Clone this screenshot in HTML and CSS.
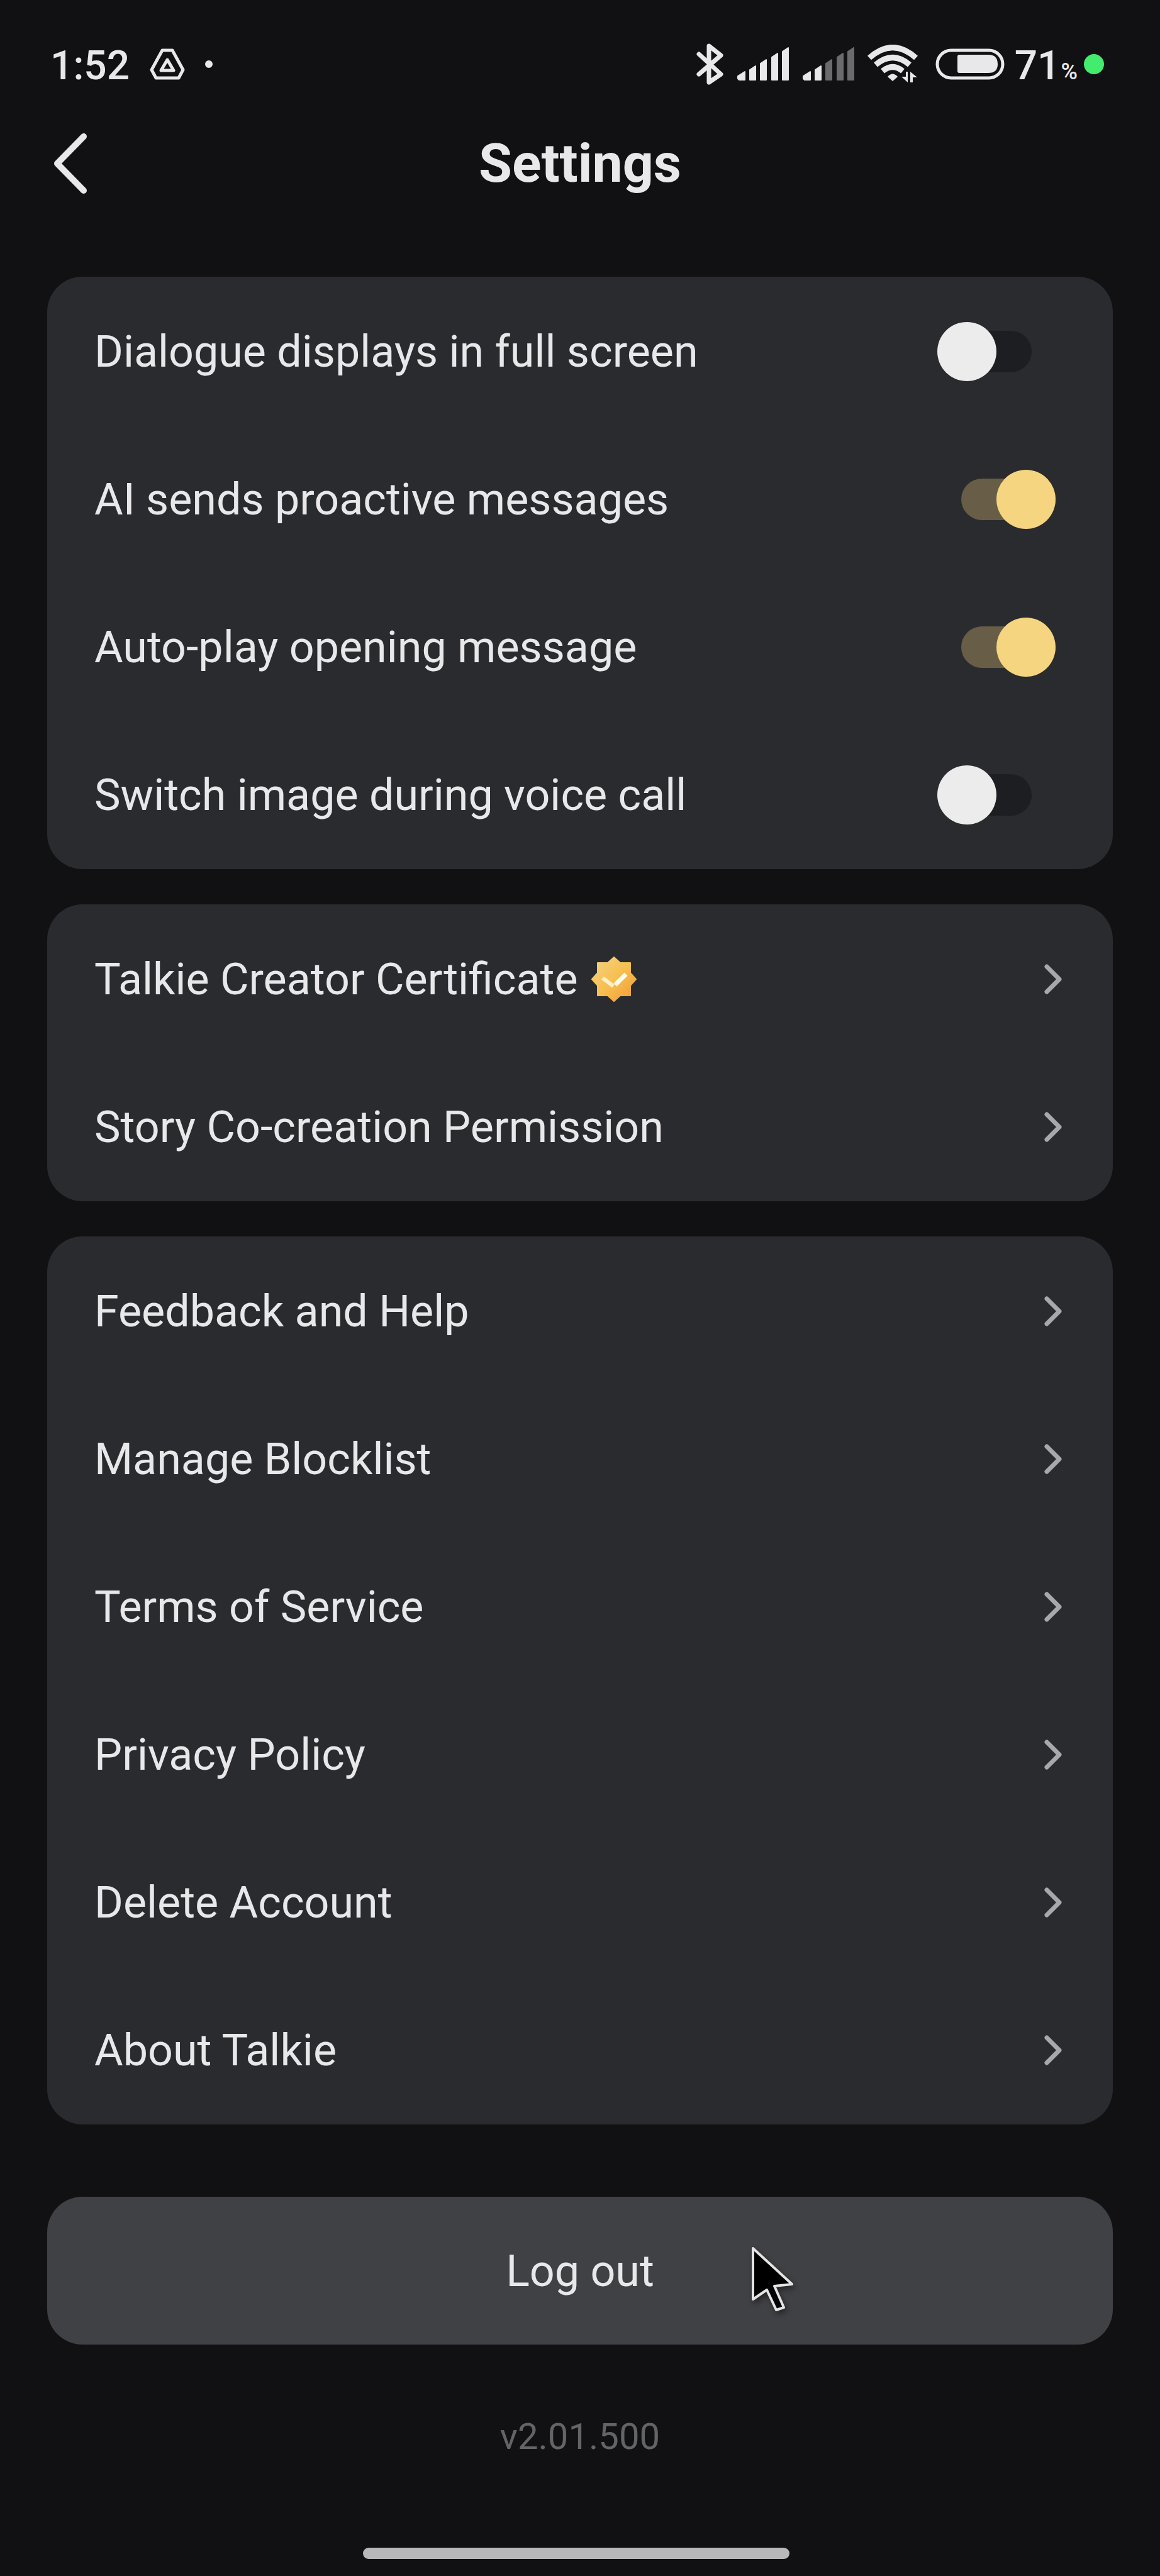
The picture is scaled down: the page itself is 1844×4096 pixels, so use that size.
FILE: index.html
```html
<!DOCTYPE html>
<html lang="en">
<head>
  <meta charset="UTF-8" />
  <meta name="viewport" content="width=device-width, initial-scale=1.0"/>
  <title>Settings</title>
  <link rel="stylesheet" href="styles.css">
</head>
<body>

  <!-- shared icons -->
  <svg class="sprite" aria-hidden="true">
    <symbol id="chevron" viewBox="0 0 36 54">
      <path d="M6 7 L26 27 L6 47" fill="none" stroke="currentColor" stroke-width="7" stroke-linecap="round" stroke-linejoin="round"/>
    </symbol>
  </svg>

  <div class="status-bar">
    <div class="status-left">
      <span class="clock">1:52</span>
      <svg class="drive" width="56" height="50" viewBox="0 0 56 50" fill="none" stroke="currentColor" stroke-width="5" stroke-linejoin="round">
        <path d="M20 3 H36 L53 34 L46 47 H10 L3 34 Z"/>
        <path d="M28 18 L38 35 H18 Z"/>
      </svg>
      <span class="dot"></span>
    </div>
    <div class="status-right">
      <svg class="bluetooth" width="44" height="68" viewBox="0 0 44 68" fill="none" stroke="currentColor" stroke-width="7" stroke-linecap="round" stroke-linejoin="round">
        <path d="M4 18 L39 50 L20 63 V5 L39 20 L4 50"/>
      </svg>
      <svg class="signal" width="83" height="54" viewBox="0 0 83 54" fill="currentColor" stroke="currentColor" stroke-width="2" stroke-linejoin="round">
        <path d="M1 46 L12 39 V52 H3 L1 50 Z"/>
        <path d="M20 36 L29 30 V52 H20 Z"/>
        <path d="M37 26 L46 20 V52 H37 Z"/>
        <path d="M55 16 L64 10 V52 H55 Z"/>
        <path d="M72 7 L81 1 V52 H72 Z"/>
      </svg>
      <svg class="signal" width="83" height="54" viewBox="0 0 83 54" fill="currentColor" stroke="currentColor" stroke-width="2" stroke-linejoin="round">
        <path d="M1 46 L12 39 V52 H3 L1 50 Z"/>
        <path d="M20 36 L29 30 V52 H20 Z"/>
        <g class="signal-off">
          <path d="M37 26 L46 20 V52 H37 Z"/>
          <path d="M55 16 L64 10 V52 H55 Z"/>
          <path d="M72 7 L81 1 V52 H72 Z"/>
        </g>
      </svg>
      <svg class="wifi" width="80" height="62" viewBox="0 0 80 62" fill="none" stroke="currentColor" stroke-width="9">
        <path d="M3 21 Q40 -12 77 21"/>
        <path d="M13 32 Q40 9 67 32"/>
        <path d="M24 42 Q40 29 56 42"/>
        <path d="M32 51 Q40 42 48 51 L40 58 Z" fill="currentColor" stroke="none"/>
        <path d="M61 43 H64 V60 L54 51 H61 Z M68 43 L79 52 H72 V60 H68 Z" fill="currentColor" stroke="none"/>
      </svg>
      <svg class="battery" width="110" height="50" viewBox="0 0 110 50">
        <rect x="3" y="3" width="104" height="44" rx="22" fill="none" stroke="currentColor" stroke-width="5"/>
        <path d="M38 10 H84 Q99 10 99 25 Q99 39 84 39 H38 Q35 39 35 36 V13 Q35 10 38 10 Z" fill="currentColor"/>
      </svg>
      <span class="percent">71<small>%</small></span>
      <span class="active-dot"></span>
    </div>
  </div>

  <header>
    <button class="back" aria-label="Back">
      <svg width="56" height="98" viewBox="0 0 56 98" fill="none" stroke="currentColor" stroke-width="10" stroke-linecap="round" stroke-linejoin="round">
        <path d="M48 6 L6 49 L48 92"/>
      </svg>
    </button>
    <h1>Settings</h1>
  </header>

  <main>
    <section class="card">
      <label class="row">Dialogue displays in full screen <input type="checkbox" class="toggle"></label>
      <label class="row">AI sends proactive messages <input type="checkbox" class="toggle" checked></label>
      <label class="row">Auto-play opening message <input type="checkbox" class="toggle" checked></label>
      <label class="row">Switch image during voice call <input type="checkbox" class="toggle"></label>
    </section>

    <section class="card">
      <a class="row" href="#">
        <span class="with-badge">Talkie Creator Certificate
          <svg class="badge" width="74" height="74" viewBox="0 0 74 74">
            <defs>
              <linearGradient id="gold" x1="0" y1="0" x2="1" y2="1">
                <stop offset="0" stop-color="#f3d488"/>
                <stop offset="0.5" stop-color="#f7bf50"/>
                <stop offset="1" stop-color="#f29a36"/>
              </linearGradient>
            </defs>
            <path d="M37 2 L47 11 H63 V27 L72 37 L63 47 V63 H47 L37 72 L27 63 H11 V47 L2 37 L11 27 V11 H27 Z" fill="url(#gold)" stroke="url(#gold)" stroke-width="2" stroke-linejoin="round"/>
            <path d="M19 35 L36 48" stroke="#fff0c8" stroke-width="6"/>
            <path d="M39 46 L56 29" stroke="#fffbe9" stroke-width="7"/>
          </svg>
        </span>
        <svg class="chevron"><use href="#chevron"/></svg>
      </a>
      <a class="row" href="#">Story Co-creation Permission <svg class="chevron"><use href="#chevron"/></svg></a>
    </section>

    <section class="card">
      <a class="row" href="#">Feedback and Help <svg class="chevron"><use href="#chevron"/></svg></a>
      <a class="row" href="#">Manage Blocklist <svg class="chevron"><use href="#chevron"/></svg></a>
      <a class="row" href="#">Terms of Service <svg class="chevron"><use href="#chevron"/></svg></a>
      <a class="row" href="#">Privacy Policy <svg class="chevron"><use href="#chevron"/></svg></a>
      <a class="row" href="#">Delete Account <svg class="chevron"><use href="#chevron"/></svg></a>
      <a class="row" href="#">About Talkie <svg class="chevron"><use href="#chevron"/></svg></a>
    </section>

    <div class="logout-area">
      <button class="logout">Log out</button>
      <svg class="cursor" width="84" height="116" viewBox="0 0 84 116">
        <path d="M7 5 V86 L29 71 L44 103 L56 99 L41 65 L69 62 Z" fill="#000" stroke="#e4e4e6" stroke-width="4" stroke-linejoin="round"/>
      </svg>
    </div>

    <p class="version">v2.01.500</p>
  </main>

  <footer><div class="home-bar"></div></footer>

</body>
</html>
```
FILE: styles.css
```css
* { box-sizing: border-box; }
body {
  margin: 0; min-height: 100vh;
  display: flex; flex-direction: column;
  background: #111113; color: #e8e8ea;
  font-family: Roboto, 'Liberation Sans', sans-serif;
  font-size: 70px; line-height: 84px;
}
.sprite { position: absolute; width: 0; height: 0; }

/* status bar */
.status-bar {
  display: flex; justify-content: space-between;
  padding: 62px 89px 0 80px;
}
.status-left, .status-right {
  display: flex; align-items: center; height: 80px;
}
.clock, .percent { padding-top: 6px; font-size: 64px; font-weight: 500; }
.drive { margin-left: 32px; }
.dot {
  width: 12px; height: 12px; margin-left: 32px;
  border-radius: 50%; background: #e8e8ea;
}
.signal { margin-left: 21px; }
.signal-off { color: #6b6b6d; fill: currentColor; stroke: currentColor; }
.wifi { margin-left: 20px; }
.battery { margin-left: 28px; }
.percent { margin-left: 16px; }
.percent small { margin-left: 1px; font-size: 36px; line-height: 1; }
.active-dot {
  width: 32px; height: 32px; margin-left: 10px;
  border-radius: 50%; background: #43ec6c;
}

/* title */
header {
  display: grid; grid-template-columns: 1fr auto 1fr;
  align-items: center;
  height: 236px; padding: 0 75px;
}
header h1 { margin: 0; font-size: 86px; font-weight: 700; }
.back {
  justify-self: start; display: flex;
  margin: 0; padding: 0 0 0 10px;
  background: none; border: none; color: inherit; cursor: pointer;
}

/* settings list */
main {
  flex: 1 0 auto;
  display: flex; flex-direction: column; gap: 56px;
  padding: 62px 75px 0;
}
.card { padding: 1px 0; border-radius: 56px; background: #2a2b2e; }
.row {
  display: flex; align-items: center; justify-content: space-between;
  height: 235px; padding: 0 75px;
  color: inherit; text-decoration: none; cursor: pointer;
}
.with-badge { display: flex; align-items: center; gap: 20px; }
.chevron { width: 36px; height: 54px; color: #a7a8ac; }

.toggle {
  appearance: none;
  display: flex; align-items: center;
  position: relative;
  width: 150px; height: 94px; margin: 0 54px 0 0;
  cursor: pointer;
}
.toggle::before {
  content: ''; width: 100%; height: 66px;
  border-radius: 33px; background: #1d1e22;
}
.toggle::after {
  content: ''; position: absolute; top: 0; left: 0;
  width: 94px; height: 94px;
  border-radius: 50%; background: #ececec;
}
.toggle:checked { margin-right: 16px; }
.toggle:checked::before { background: #685d47; }
.toggle:checked::after { left: auto; right: 0; background: #f5d57f; }

/* log out */
.logout-area { position: relative; margin-top: 59px; }
.logout {
  display: block; width: 100%; height: 235px; padding: 0;
  border: none; border-radius: 56px;
  background: #404144; color: inherit;
  font: inherit; cursor: pointer;
}
.cursor {
  position: absolute; top: 77px; left: calc(50% + 268px);
  filter: drop-shadow(3px 5px 4px rgba(0,0,0,0.4));
  pointer-events: none;
}
.version {
  margin: 48px 0 0; text-align: center;
  font-size: 58px; color: #636466;
}

footer { padding: 0 12px 27px 0; }
.home-bar {
  width: 37%; height: 18px; margin: 0 auto;
  border-radius: 9px; background: #b8b8ba;
}
```
